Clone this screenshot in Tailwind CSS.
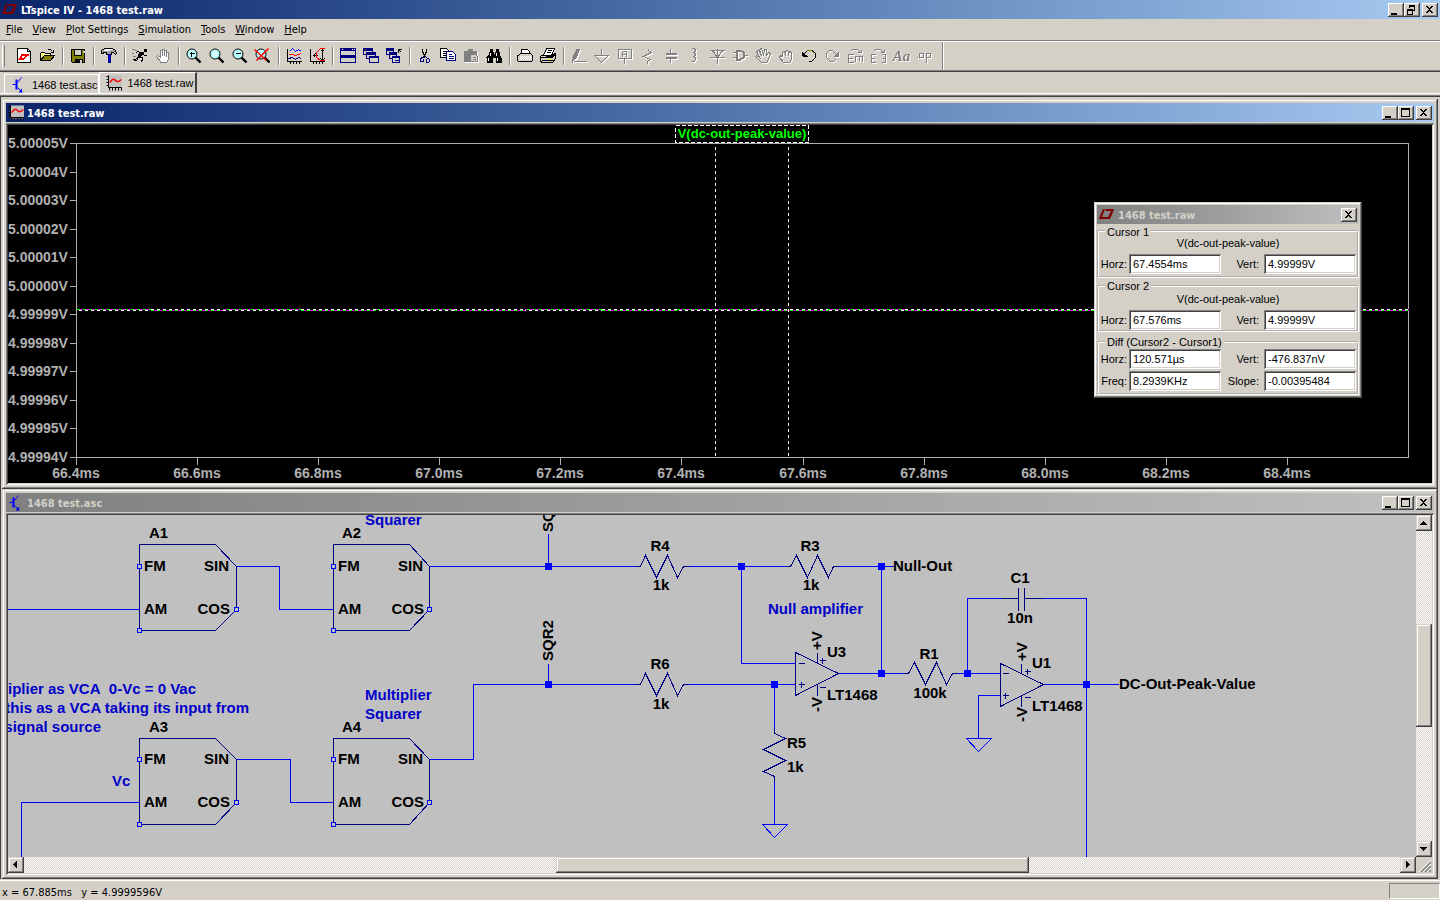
<!DOCTYPE html>
<html lang="en">
<head>
    <meta charset="UTF-8">
    <meta name="viewport" content="width=device-width, initial-scale=1.0">
    <title>LTspice IV - 1468 test.raw</title>
    <script src="https://cdn.jsdelivr.net/npm/@tailwindcss/browser@4"></script>
</head>
<body class="h-screen flex flex-col overflow-hidden bg-[#d4d0c8] text-black text-[11px] leading-4 font-['DejaVu_Sans_Condensed','DejaVu_Sans',sans-serif]">

    <!-- shared symbols -->
    <svg class="hidden">
        <symbol id="lt" viewBox="0 0 16 12"><path fill="currentColor" d="M4 0H6L3 8H7L6 10H0L1 7ZM7 0H15L14 3L11 10H6L7 8H9L12 2H6Z"/></symbol>
        <symbol id="wave" viewBox="-.5 -.5 16 16"><path fill="#c0c0c0" d="M2 0H16V13H2Z"/><path fill="none" stroke="#000" d="M2 0V12H15M0 1H2M0 4H2M0 7H2M0 10H2M3 12V15M6 12V15M9 12V15M12 12V15M15 12V15"/><path fill="none" stroke="red" stroke-width="1.5" d="M3 7L6 4H8L10 6H12L15 4"/></symbol>
        <symbol id="npn" viewBox="-.5 -.5 16 16"><path fill="none" stroke="#00f" d="M1 7H5M6 5L10 0M6 10L10 14"/><path fill="#00f" d="M4 2H6V12H4ZM11 15H7L10 11Z"/></symbol>
        <symbol id="min" viewBox="0 0 16 14"><path d="M3 10H9V12H3Z"/></symbol>
        <symbol id="max" viewBox="0 0 16 14"><path d="M3 2H12V11H3ZM4 4V10H11V4Z" fill-rule="evenodd"/></symbol>
        <symbol id="restore" viewBox="0 0 16 14"><path fill-rule="evenodd" d="M5 2H11V8H9V7H10V4H6V5H5ZM3 6H9V12H3ZM4 8V11H8V8Z"/></symbol>
        <symbol id="close" viewBox="0 0 16 14"><path d="M4 3H6V4H7V5H8V4H9V3H11V4H10V5H9V6H8V7H9V8H10V9H11V10H9V9H8V8H7V9H6V10H4V9H5V8H6V7H7V6H6V5H5V4H4Z"/></symbol>
    </svg>

    <!-- title bar -->
    <header class="h-[19px] shrink-0 flex items-center px-0.5 bg-linear-to-r from-[#0a246a] to-[#a6caf0]">
        <svg class="w-4 h-3 mr-[3px] text-[#800000]"><use href="#lt"/></svg>
        <h1 class="flex-1 pt-0.5 font-bold text-white">LTspice IV - 1468 test.raw</h1>
        <button aria-label="Minimize" class="w-4 h-3.5 bg-[#d4d0c8] shadow-[inset_-1px_-1px_#404040,inset_1px_1px_#fff,inset_-2px_-2px_#808080]"><svg class="w-4 h-3.5"><use href="#min"/></svg></button>
        <button aria-label="Restore" class="w-4 h-3.5 bg-[#d4d0c8] shadow-[inset_-1px_-1px_#404040,inset_1px_1px_#fff,inset_-2px_-2px_#808080]"><svg class="w-4 h-3.5"><use href="#restore"/></svg></button>
        <button aria-label="Close" class="ml-0.5 w-4 h-3.5 bg-[#d4d0c8] shadow-[inset_-1px_-1px_#404040,inset_1px_1px_#fff,inset_-2px_-2px_#808080]"><svg class="w-4 h-3.5"><use href="#close"/></svg></button>
    </header>

    <!-- menu -->
    <nav class="h-[22px] shrink-0 flex items-center gap-2.5 pl-1.5 pt-px border-b border-[#808080]">
        <button><u>F</u>ile</button>
        <button><u>V</u>iew</button>
        <button><u>P</u>lot Settings</button>
        <button><u>S</u>imulation</button>
        <button><u>T</u>ools</button>
        <button><u>W</u>indow</button>
        <button><u>H</u>elp</button>
    </nav>

    <!-- toolbar -->
    <div class="h-[31px] shrink-0 flex items-center pb-px border-t border-t-white border-b border-b-[#404040] shadow-[inset_0_-1px_#808080]">
        <div class="w-[3px] h-[22px] ml-0.5 mr-2 border-l border-l-white border-r border-r-[#808080]"></div>
        <div class="flex">
            <button aria-label="New schematic" class="w-[23px] pl-[3px]"><svg class="size-4" viewBox="-.5 -.5 16 16" shape-rendering="crispEdges"><path fill="#fff" stroke="#000" d="M1 0H11L14 3V14H1Z"/><path fill="none" stroke="#000" d="M11 0V3H14"/><path fill="red" d="M5 5H7L5 9H8L7 11H2L4 8ZM7 5H13L12 7H11L9 10H7L9 7H6Z"/></svg></button>
            <button aria-label="Open" class="w-[23px] pl-[3px]"><svg class="size-4" viewBox="-.5 -.5 16 16" shape-rendering="crispEdges"><path fill="#ff8" stroke="#000" d="M1 12V5L2 4H5L6 5H11V7"/><path fill="#808000" stroke="#000" d="M1 12L5 7H15L11 12Z"/><path fill="none" stroke="#000" d="M8 2L9 1H11L13 3M14 1V4H11"/></svg></button>
        </div>
        <div class="w-0.5 h-[18px] mx-[3px] border-l border-l-[#808080] border-r border-r-white"></div>
        <div class="flex">
            <button aria-label="Save" class="w-[23px] pl-[3px]"><svg class="size-4" viewBox="-.5 -.5 16 16" shape-rendering="crispEdges"><path fill="#808000" stroke="#000" d="M1 1H14V14H2L1 13Z"/><path fill="#d4d0c8" stroke="#000" d="M4 1H11V7H4Z"/><path d="M4 10H12V14H4Z"/><path fill="#d4d0c8" d="M9 11H11V14H9ZM12 2H14V4H12Z"/></svg></button>
        </div>
        <div class="w-0.5 h-[18px] mx-[3px] border-l border-l-[#808080] border-r border-r-white"></div>
        <div class="flex">
            <button aria-label="Control panel" class="w-[23px] pl-[3px]"><svg class="size-4" viewBox="-.5 -.5 16 16" shape-rendering="crispEdges"><path fill="#a0a0a0" stroke="#000" d="M0 2L3 0H11L14 2L15 5L14 6L12 4H10V6H5V4H3L1 5H0Z"/><path stroke="#fff" d="M3 1H11M2 2H8"/><path fill="#00f" stroke="#000080" d="M7 6H9V14H7Z"/></svg></button>
        </div>
        <div class="w-0.5 h-[18px] mx-[3px] border-l border-l-[#808080] border-r border-r-white"></div>
        <div class="flex">
            <button aria-label="Run" class="w-[23px] pl-0.5"><svg class="size-4" viewBox="-.5 -.5 16 16" shape-rendering="crispEdges"><path d="M12 0H15V3H12ZM8 3H12V5L9 9H6V7Z"/><path fill="none" stroke="#000" d="M9 4L6 3L4 5M11 5L13 7H15M8 8L11 10L10 14M9 8L12 10M7 8L4 11H1M7 9L5 12H2"/><path stroke="#808080" d="M0 1H3M3 2H5M0 5H2M1 8H4"/></svg></button>
            <button disabled aria-label="Halt" class="w-[23px] pl-[3px]"><svg class="size-4" viewBox="-.5 -.5 16 16" shape-rendering="crispEdges"><path fill="#fff" stroke="#808080" d="M5 13L1 8L2 7L5 9V2H7V7V1H9V7V2H11V8V4H13V11L11 14H5Z"/></svg></button>
        </div>
        <div class="w-0.5 h-[18px] mx-[3px] border-l border-l-[#808080] border-r border-r-white"></div>
        <div class="flex">
            <button aria-label="Zoom in" class="w-[23px] pl-[3px]"><svg class="size-4" viewBox="-.5 -.5 16 16"><circle cx="5.5" cy="5.5" r="5" fill="#bff" stroke="#000"/><path stroke="#000" shape-rendering="crispEdges" d="M3 5H8M5 3V8"/><path stroke="#000" stroke-width="2.4" d="M9 9L14 14"/></svg></button>
            <button aria-label="Pan" class="w-[23px] pl-[3px]"><svg class="size-4" viewBox="-.5 -.5 16 16"><circle cx="5.5" cy="5.5" r="5" fill="#dff" stroke="#000"/><circle cx="5.5" cy="5.5" r="3.8" fill="none" stroke="#8ff"/><path stroke="#000" stroke-width="2.4" d="M9 9L14 14"/></svg></button>
            <button aria-label="Zoom out" class="w-[23px] pl-[3px]"><svg class="size-4" viewBox="-.5 -.5 16 16"><circle cx="5.5" cy="5.5" r="5" fill="#bff" stroke="#000"/><path stroke="#000" shape-rendering="crispEdges" d="M3 5H8"/><path stroke="#000" stroke-width="2.4" d="M9 9L14 14"/></svg></button>
            <button aria-label="Zoom full extents" class="w-[23px] pl-0.5"><svg class="size-4" viewBox="-.5 -.5 16 16"><circle cx="6.5" cy="5.5" r="5" fill="#bff" stroke="#000"/><path stroke="#000" stroke-width="2.4" d="M10 9L15 14"/><path stroke="red" stroke-width="1.5" d="M0 1L12 12M14 0L2 12"/></svg></button>
        </div>
        <div class="w-0.5 h-[18px] mx-[3px] border-l border-l-[#808080] border-r border-r-white"></div>
        <div class="flex">
            <button aria-label="Pick visible traces" class="w-[23px] pl-[3px]"><svg class="size-4" viewBox="-.5 -.5 16 16" shape-rendering="crispEdges"><path fill="none" stroke="#000" d="M1 0V13H16M0 2H1M0 5H1M0 8H1M0 11H1M4 13V15M7 13V15M10 13V15M13 13V15"/><path fill="none" stroke="#00f" d="M3 3L6 0L9 3L12 1L15 3"/><path fill="none" stroke="red" d="M2 6H6L9 7L15 5"/><path fill="none" stroke="#000080" d="M2 10L6 9L9 11L12 9L15 10"/></svg></button>
            <button aria-label="Autorange" class="w-[23px] pl-[3px]"><svg class="size-4" viewBox="-.5 -.5 16 16" shape-rendering="crispEdges"><path fill="none" stroke="#000" d="M1 0V13H16M0 2H1M0 5H1M0 8H1M0 11H1M4 13V15M7 13V15M10 13V15M13 13V15M13 1V12M11 3L13 1L15 3M11 10L13 12L15 10M4 7H8M4 7L6 5M4 7L6 9"/><path fill="none" stroke="red" d="M15 0H11L7 4V9L11 12H15"/></svg></button>
        </div>
        <div class="w-0.5 h-[18px] mx-[3px] border-l border-l-[#808080] border-r border-r-white"></div>
        <div class="flex">
            <button aria-label="Tile windows" class="w-[23px] pl-[3px]"><svg class="size-4" viewBox="-.5 -.5 16 16" shape-rendering="crispEdges"><path fill="#d4d0c8" stroke="#000080" d="M0 0H15V14H0ZM0 7H15"/><path stroke="#000080" stroke-width="2" d="M0 1H15M0 8H15"/><path stroke="#fff" d="M11 1H12M13 1H14M1 1H2"/></svg></button>
            <button aria-label="Cascade windows" class="w-[23px] pl-[3px]"><svg class="size-4" viewBox="-.5 -.5 16 16" shape-rendering="crispEdges"><g fill="#d4d0c8" stroke="#000080"><path d="M0 0H9V6H0ZM0 1H9M0 2H9"/><path d="M3 4H12V10H3ZM3 5H12M3 6H12"/><path d="M6 8H15V14H6ZM6 9H15"/></g><path stroke="red" d="M1 1H2"/></svg></button>
            <button aria-label="Close all windows" class="w-[23px] pl-[3px]"><svg class="size-4" viewBox="-.5 -.5 16 16" shape-rendering="crispEdges"><g fill="#d4d0c8" stroke="#000080"><path d="M0 0H7V6H0ZM0 1H7M0 2H7"/><path d="M3 4H10V10H3ZM3 5H10M3 6H10"/><path d="M6 8H13V14H6ZM6 9H13M8 12H12"/></g><path fill="none" stroke="#000" d="M12 4V1H15M12 1L15 4"/></svg></button>
        </div>
        <div class="w-0.5 h-[18px] mx-[3px] border-l border-l-[#808080] border-r border-r-white"></div>
        <div class="flex">
            <button aria-label="Cut" class="w-[23px] pl-[3px]"><svg class="size-4" viewBox="-.5 -.5 16 16" shape-rendering="crispEdges"><path fill="none" stroke="#000" d="M5 0V3L7 7M9 0V3L7 7V9"/><path fill="none" stroke="#000080" d="M7 8L5 9H4L3 11V13H6V10M8 8L10 10H11L12 11V13L11 14H9V10"/></svg></button>
            <button aria-label="Copy" class="w-[23px] pl-[3px]"><svg class="size-4" viewBox="-.5 -.5 16 16" shape-rendering="crispEdges"><path fill="#fff" stroke="#000" d="M0 0H6L8 2V9H0ZM2 3H5M2 5H6M2 7H6"/><path fill="#fff" stroke="#000080" d="M6 3H12L15 6V12H6ZM8 6H11M8 8H13M8 10H13"/></svg></button>
            <button disabled aria-label="Paste" class="w-[23px] pl-[3px]"><svg class="size-4 drop-shadow-[1px_1px_0_#fff]" viewBox="-.5 -.5 16 16" shape-rendering="crispEdges"><path fill="#808080" d="M0 2H4V0H9V2H13V6H8V13H0Z"/><path fill="#d4d0c8" stroke="#808080" d="M7 6H12L14 8V13H7ZM9 9H12M9 11H12"/></svg></button>
            <button aria-label="Find" class="w-[23px] pl-[3px]"><svg class="size-4" viewBox="-.5 -.5 16 16" shape-rendering="crispEdges"><path d="M3 0H6V3H7V5H8V3H9V0H12V3H13V6L15 9V14H9V9H6V14H0V9L2 6V3H3Z"/><path stroke="#fff" d="M4 4V7M2 9V12M10 4V7M11 9V12"/></svg></button>
        </div>
        <div class="w-0.5 h-[18px] mx-[3px] border-l border-l-[#808080] border-r border-r-white"></div>
        <div class="flex">
            <button aria-label="Print preview" class="w-[23px] pl-[3px]"><svg class="size-4" viewBox="-.5 -.5 16 16" shape-rendering="crispEdges"><path fill="#d4d0c8" stroke="#000" d="M1 7L3 5H13L15 7V12L14 13H1L0 12V7Z"/><path fill="#fff" stroke="#000" d="M4 5V1H10L12 3V5Z"/><path stroke="#fff" stroke-dasharray="1 1" d="M2 8H14M3 9H14M2 10H14M3 11H14"/></svg></button>
            <button aria-label="Print" class="w-[23px] pl-[3px]"><svg class="size-4" viewBox="-.5 -.5 16 16" shape-rendering="crispEdges"><path fill="#d4d0c8" stroke="#000" d="M0 8L3 6H13L15 5V10L12 14H1L0 12Z"/><path fill="#fff" stroke="#000" d="M3 7L6 0H14L11 7ZM7 2H11M6 4H10"/><path stroke="#000" d="M0 9H12L15 6M1 12H12"/><path stroke="#ff0" d="M7 11H10"/></svg></button>
        </div>
        <div class="w-0.5 h-[18px] mx-[3px] border-l border-l-[#808080] border-r border-r-white"></div>
        <div class="flex">
            <button disabled aria-label="Wire" class="w-[23px] pl-[3px]"><svg class="size-4 drop-shadow-[1px_1px_0_#fff]" viewBox="-.5 -.5 16 16" shape-rendering="crispEdges"><path fill="#808080" d="M5 0H9L5 10L2 12L1 9Z"/><path stroke="#808080" d="M2 13H15M1 10V14"/></svg></button>
            <button disabled aria-label="Ground" class="w-[23px] pl-[3px]"><svg class="size-4 drop-shadow-[1px_1px_0_#fff]" viewBox="-.5 -.5 16 16" shape-rendering="crispEdges"><path fill="none" stroke="#808080" d="M7 0V7M0 7H14L7 14Z"/></svg></button>
            <button disabled aria-label="Label net" class="w-[23px] pl-[3px]"><svg class="size-4 drop-shadow-[1px_1px_0_#fff]" viewBox="-.5 -.5 16 16" shape-rendering="crispEdges"><path fill="none" stroke="#808080" d="M1 1H14V10H1ZM7 10V15M5 8V4L6 3H9V8M5 6H9"/></svg></button>
            <button disabled aria-label="Resistor" class="w-[23px] pl-[3px]"><svg class="size-4 drop-shadow-[1px_1px_0_#fff]" viewBox="-.5 -.5 16 16" shape-rendering="crispEdges"><path fill="none" stroke="#808080" d="M8 0V2L11 4L3 8L10 11L7 13V15"/></svg></button>
            <button disabled aria-label="Capacitor" class="w-[23px] pl-[3px]"><svg class="size-4 drop-shadow-[1px_1px_0_#fff]" viewBox="-.5 -.5 16 16" shape-rendering="crispEdges"><path stroke="#808080" d="M7 0V5M7 9V14"/><path stroke="#808080" stroke-width="2" d="M2 5.5H13M2 9.5H13"/></svg></button>
            <button disabled aria-label="Inductor" class="w-[23px] pl-[3px]"><svg class="size-4 drop-shadow-[1px_1px_0_#fff]" viewBox="-.5 -.5 16 16" shape-rendering="crispEdges"><path fill="none" stroke="#808080" d="M5 0H8L9 2L8 4H6H8L9 6L8 8H6H8L9 10L8 13H5"/></svg></button>
            <button disabled aria-label="Diode" class="w-[23px] pl-[3px]"><svg class="size-4 drop-shadow-[1px_1px_0_#fff]" viewBox="-.5 -.5 16 16" shape-rendering="crispEdges"><path fill="none" stroke="#808080" d="M8 0V15M0 2H15M3 3L8 8L13 3M0 9H15"/><path fill="none" stroke="#808080" d="M3 2L8 9L13 2"/></svg></button>
            <button disabled aria-label="Component" class="w-[23px] pl-[3px]"><svg class="size-4 drop-shadow-[1px_1px_0_#fff]" viewBox="-.5 -.5 16 16" shape-rendering="crispEdges"><path fill="none" stroke="#808080" stroke-width="2" d="M4 2H8L11 4V9L8 11H4Z"/><path stroke="#808080" d="M0 4H4M0 9H4M11 7H15"/></svg></button>
            <button disabled aria-label="Move" class="w-[23px] pl-[3px]"><svg class="size-4 drop-shadow-[1px_1px_0_#fff]" viewBox="-.5 -.5 16 16" shape-rendering="crispEdges"><path fill="none" stroke="#808080" d="M6 14L0 8L1 7L4 9L1 3L3 2L6 7L4 1L6 0L8 6L9 1H11V7L13 4L15 5L13 11L11 14Z"/></svg></button>
            <button disabled aria-label="Drag" class="w-[23px] pl-[3px]"><svg class="size-4 drop-shadow-[1px_1px_0_#fff]" viewBox="-.5 -.5 16 16" shape-rendering="crispEdges"><path fill="none" stroke="#808080" d="M5 14L1 9L2 7L4 8V4L5 3L7 4V7V3L9 2L10 3V7V4L12 3L13 5V11L11 14Z"/></svg></button>
            <button aria-label="Undo" class="w-[23px] pl-[3px]"><svg class="size-4" viewBox="-.5 -.5 16 16" shape-rendering="crispEdges"><path fill="none" stroke="#808000" d="M3 5L6 2H10L13 5"/><path fill="none" stroke="#000" d="M2 6L5 3M10 2H11L14 5V9L11 12L10 13H7M1 3V7H5"/><path d="M1 4L6 8H1Z"/></svg></button>
            <button disabled aria-label="Redo" class="w-[23px] pl-[3px]"><svg class="size-4 drop-shadow-[1px_1px_0_#fff]" viewBox="-.5 -.5 16 16" shape-rendering="crispEdges"><path fill="none" stroke="#808080" d="M12 6L9 3L8 2H5L2 5V9L5 12L6 13H9L11 11"/><path fill="#808080" d="M14 3V8H9Z"/></svg></button>
            <button disabled aria-label="Rotate" class="w-[23px] pl-[3px]"><svg class="size-4 drop-shadow-[1px_1px_0_#fff]" viewBox="-.5 -.5 16 16" shape-rendering="crispEdges"><path fill="none" stroke="#808080" d="M3 3L5 1H10L13 4M14 1V4H10M6 6H1V14H6M1 10H5M8 13V8H15V13M12 8V12"/></svg></button>
            <button disabled aria-label="Mirror" class="w-[23px] pl-[3px]"><svg class="size-4 drop-shadow-[1px_1px_0_#fff]" viewBox="-.5 -.5 16 16" shape-rendering="crispEdges"><path fill="none" stroke="#808080" d="M3 3L5 1H10L13 4M14 1V4H10M5 6H1V14H5M1 10H4M11 6H15V14H11M12 10H15"/></svg></button>
            <button disabled aria-label="Text" class="w-[23px] h-4 text-[15px] leading-4 font-bold italic font-['Liberation_Serif',serif] text-[#808080] drop-shadow-[1px_1px_0_#fff]">Aa</button>
            <button disabled aria-label="SPICE directive" class="w-[23px] pl-[3px]"><svg class="size-4 drop-shadow-[1px_1px_0_#fff]" viewBox="-.5 -.5 16 16" shape-rendering="crispEdges"><path fill="none" stroke="#808080" d="M0 9H1M3 5H7V9H3ZM10 14V5H14V9H10"/></svg></button>
        </div>
        <div class="w-0.5 h-full ml-1.5 border-l border-l-[#808080] border-r border-r-white"></div>
    </div>

    <!-- window tabs -->
    <div class="h-[22px] shrink-0 flex items-end pl-1 border-b border-white font-['Liberation_Sans',sans-serif]">
        <button class="h-[19px] flex items-center pt-px pl-1.5 pr-px border-t border-l border-r border-white"><svg class="size-4 mr-[5px]"><use href="#npn"/></svg>1468 test.asc</button>
        <button class="h-[21px] flex items-center pl-1.5 pr-0.5 border-t border-l border-t-white border-l-white border-r-2 border-r-[#404040]"><svg class="size-4 mr-[5px]"><use href="#wave"/></svg>1468 test.raw</button>
    </div>

    <!-- child windows -->
    <main class="flex-1 min-h-0 mt-px pt-1 px-0.5 flex flex-col shadow-[inset_0_1px_#808080,inset_1px_2px_#404040]">

        <section class="flex-1 min-h-0 p-1 flex flex-col bg-[#d4d0c8] shadow-[inset_-1px_-1px_#404040,inset_1px_1px_#d4d0c8,inset_-2px_-2px_#808080,inset_2px_2px_#fff]">
            <div class="h-[19px] shrink-0 flex items-center px-0.5 bg-linear-to-r from-[#0a246a] to-[#a6caf0]">
                <svg class="size-4 mr-[3px]"><use href="#wave"/></svg>
                <h2 class="flex-1 pt-0.5 font-bold text-white">1468 test.raw</h2>
                <button aria-label="Minimize" class="w-4 h-3.5 bg-[#d4d0c8] shadow-[inset_-1px_-1px_#404040,inset_1px_1px_#fff,inset_-2px_-2px_#808080]"><svg class="w-4 h-3.5"><use href="#min"/></svg></button>
                <button aria-label="Maximize" class="w-4 h-3.5 bg-[#d4d0c8] shadow-[inset_-1px_-1px_#404040,inset_1px_1px_#fff,inset_-2px_-2px_#808080]"><svg class="w-4 h-3.5"><use href="#max"/></svg></button>
                <button aria-label="Close" class="ml-0.5 w-4 h-3.5 bg-[#d4d0c8] shadow-[inset_-1px_-1px_#404040,inset_1px_1px_#fff,inset_-2px_-2px_#808080]"><svg class="w-4 h-3.5"><use href="#close"/></svg></button>
            </div>
            <div class="relative flex-1 min-h-0 mt-px p-0.5 shadow-[inset_1px_1px_#808080,inset_-1px_-1px_#fff,inset_2px_2px_#404040,inset_-2px_-2px_#d4d0c8]">
                <svg class="block w-full h-full bg-black font-['Liberation_Sans',sans-serif] font-bold text-[14px]">
                    <g transform="translate(-7.5 -124.5)" fill="none" stroke="#b0b0b0" shape-rendering="crispEdges">
                        <path d="M69 143H1408V457H69M76 143V464"/>
                        <path d="M69 172H76M69 200H76M69 229H76M69 257H76M69 286H76M69 314H76M69 343H76M69 371H76M69 400H76M69 428H76"/>
                        <path d="M197 457V464M318 457V464M439 457V464M560 457V464M681 457V464M803 457V464M924 457V464M1045 457V464M1166 457V464M1287 457V464"/>
                        <!-- trace -->
                        <path stroke="#0f0" d="M76 309H1408"/>
                        <path stroke="#f0f" stroke-dasharray="3 3" d="M79 309H1408"/>
                        <path stroke="#fff" stroke-dasharray="3 3" d="M78 310H1408"/>
                        <path stroke="#000" d="M150 309H222M300 309H375M453 309H524M601 309H676M753 309H827M904 309H978M1054 309H1128M1356 309H1408"/>
                        <path stroke="#fff" stroke-dasharray="3 3" d="M150 309H222M300 309H375M453 309H524M601 309H676M753 309H827M904 309H978M1054 309H1128M1356 309H1408"/>
                        <path stroke="#0f0" d="M150 310H222M300 310H375M453 310H524M601 310H676M753 310H827M904 310H978M1054 310H1128M1356 310H1408"/>
                        <path stroke="#f0f" stroke-dasharray="3 3" d="M153 310H222M303 310H375M456 310H524M604 310H676M756 310H827M907 310H978M1057 310H1128M1359 310H1408"/>
                        <!-- cursors -->
                        <path stroke="#fff" stroke-dasharray="3 3" d="M715 146V457M788 146V457"/>
                        <path stroke="#fff" stroke-dasharray="4 2" d="M675 125H808V142H675Z"/>
                    </g>
                    <g transform="translate(-8 -125)">
                        <text x="742" y="138" text-anchor="middle" fill="#0f0" class="text-[13px]">V(dc-out-peak-value)</text>
                        <g fill="#b0b0b0">
                            <text x="8" y="148">5.00005V</text>
                            <text x="8" y="177">5.00004V</text>
                            <text x="8" y="205">5.00003V</text>
                            <text x="8" y="234">5.00002V</text>
                            <text x="8" y="262">5.00001V</text>
                            <text x="8" y="291">5.00000V</text>
                            <text x="8" y="319">4.99999V</text>
                            <text x="8" y="348">4.99998V</text>
                            <text x="8" y="376">4.99997V</text>
                            <text x="8" y="405">4.99996V</text>
                            <text x="8" y="433">4.99995V</text>
                            <text x="8" y="462">4.99994V</text>
                        </g>
                        <g fill="#b0b0b0" text-anchor="middle">
                            <text x="76" y="478">66.4ms</text>
                            <text x="197" y="478">66.6ms</text>
                            <text x="318" y="478">66.8ms</text>
                            <text x="439" y="478">67.0ms</text>
                            <text x="560" y="478">67.2ms</text>
                            <text x="681" y="478">67.4ms</text>
                            <text x="803" y="478">67.6ms</text>
                            <text x="924" y="478">67.8ms</text>
                            <text x="1045" y="478">68.0ms</text>
                            <text x="1166" y="478">68.2ms</text>
                            <text x="1287" y="478">68.4ms</text>
                        </g>
                    </g>
                </svg>

                <!-- cursor readout -->
                <div class="absolute top-[79px] right-[72px] w-[268px] p-[3px] bg-[#d4d0c8] leading-3 font-['Liberation_Sans',sans-serif] shadow-[inset_-1px_-1px_#404040,inset_1px_1px_#d4d0c8,inset_-2px_-2px_#808080,inset_2px_2px_#fff]">
                    <div class="h-[19px] flex items-center px-0.5 bg-linear-to-r from-[#808080] to-[#c0c0c0] font-['DejaVu_Sans_Condensed','DejaVu_Sans',sans-serif]">
                        <svg class="w-4 h-3 mr-[3px] text-[#800000]"><use href="#lt"/></svg>
                        <h3 class="flex-1 pt-0.5 font-bold text-[#d4d0c8]">1468 test.raw</h3>
                        <button aria-label="Close" class="w-4 h-3.5 bg-[#d4d0c8] shadow-[inset_-1px_-1px_#404040,inset_1px_1px_#fff,inset_-2px_-2px_#808080]"><svg class="w-4 h-3.5"><use href="#close"/></svg></button>
                    </div>
                    <fieldset class="mt-0.5 pb-0.5 border-2 [border-style:groove] border-white">
                        <legend class="h-[10px] overflow-hidden ml-1.5 px-0.5">Cursor 1</legend>
                        <p class="h-[14px] mb-1 leading-[14px] text-center">V(dc-out-peak-value)</p>
                        <div class="flex items-center">
                            <label for="c1-horz" class="w-7 text-right mr-0.5">Horz:</label>
                            <input id="c1-horz" readonly value="67.4554ms" class="w-[92px] h-5 px-1 bg-white shadow-[inset_1px_1px_#808080,inset_-1px_-1px_#fff,inset_2px_2px_#404040,inset_-2px_-2px_#d4d0c8]">
                            <label for="c1-vert" class="w-[38px] text-right mr-[5px]">Vert:</label>
                            <input id="c1-vert" readonly value="4.99999V" class="w-[92px] h-5 px-1 bg-white shadow-[inset_1px_1px_#808080,inset_-1px_-1px_#fff,inset_2px_2px_#404040,inset_-2px_-2px_#d4d0c8]">
                        </div>
                    </fieldset>
                    <fieldset class="mt-0.5 border-2 [border-style:groove] border-white">
                        <legend class="ml-1.5 px-0.5">Cursor 2</legend>
                        <p class="h-[14px] mb-1 leading-[14px] text-center">V(dc-out-peak-value)</p>
                        <div class="flex items-center">
                            <label for="c2-horz" class="w-7 text-right mr-0.5">Horz:</label>
                            <input id="c2-horz" readonly value="67.576ms" class="w-[92px] h-5 px-1 bg-white shadow-[inset_1px_1px_#808080,inset_-1px_-1px_#fff,inset_2px_2px_#404040,inset_-2px_-2px_#d4d0c8]">
                            <label for="c2-vert" class="w-[38px] text-right mr-[5px]">Vert:</label>
                            <input id="c2-vert" readonly value="4.99999V" class="w-[92px] h-5 px-1 bg-white shadow-[inset_1px_1px_#808080,inset_-1px_-1px_#fff,inset_2px_2px_#404040,inset_-2px_-2px_#d4d0c8]">
                        </div>
                    </fieldset>
                    <fieldset class="mt-1 pt-px pb-0.5 border-2 [border-style:groove] border-white">
                        <legend class="ml-1.5 px-0.5">Diff (Cursor2 - Cursor1)</legend>
                        <div class="flex items-center mb-0.5">
                            <label for="d-horz" class="w-7 text-right mr-0.5">Horz:</label>
                            <input id="d-horz" readonly value="120.571µs" class="w-[92px] h-5 px-1 bg-white shadow-[inset_1px_1px_#808080,inset_-1px_-1px_#fff,inset_2px_2px_#404040,inset_-2px_-2px_#d4d0c8]">
                            <label for="d-vert" class="w-[38px] text-right mr-[5px]">Vert:</label>
                            <input id="d-vert" readonly value="-476.837nV" class="w-[92px] h-5 px-1 bg-white shadow-[inset_1px_1px_#808080,inset_-1px_-1px_#fff,inset_2px_2px_#404040,inset_-2px_-2px_#d4d0c8]">
                        </div>
                        <div class="flex items-center">
                            <label for="d-freq" class="w-7 text-right mr-0.5">Freq:</label>
                            <input id="d-freq" readonly value="8.2939KHz" class="w-[92px] h-5 px-1 bg-white shadow-[inset_1px_1px_#808080,inset_-1px_-1px_#fff,inset_2px_2px_#404040,inset_-2px_-2px_#d4d0c8]">
                            <label for="d-slope" class="w-[38px] text-right mr-[5px]">Slope:</label>
                            <input id="d-slope" readonly value="-0.00395484" class="w-[92px] h-5 px-1 bg-white shadow-[inset_1px_1px_#808080,inset_-1px_-1px_#fff,inset_2px_2px_#404040,inset_-2px_-2px_#d4d0c8]">
                        </div>
                    </fieldset>
                </div>
            </div>
        </section>

        <section class="flex-1 min-h-0 p-1 flex flex-col bg-[#d4d0c8] shadow-[inset_-1px_-1px_#404040,inset_1px_1px_#d4d0c8,inset_-2px_-2px_#808080,inset_2px_2px_#fff]">
            <div class="h-[19px] shrink-0 flex items-center px-0.5 bg-linear-to-r from-[#808080] to-[#c0c0c0]">
                <svg class="size-4 mr-[3px]"><use href="#npn"/></svg>
                <h2 class="flex-1 pt-0.5 font-bold text-[#d4d0c8]">1468 test.asc</h2>
                <button aria-label="Minimize" class="w-4 h-3.5 bg-[#d4d0c8] shadow-[inset_-1px_-1px_#404040,inset_1px_1px_#fff,inset_-2px_-2px_#808080]"><svg class="w-4 h-3.5"><use href="#min"/></svg></button>
                <button aria-label="Maximize" class="w-4 h-3.5 bg-[#d4d0c8] shadow-[inset_-1px_-1px_#404040,inset_1px_1px_#fff,inset_-2px_-2px_#808080]"><svg class="w-4 h-3.5"><use href="#max"/></svg></button>
                <button aria-label="Close" class="ml-0.5 w-4 h-3.5 bg-[#d4d0c8] shadow-[inset_-1px_-1px_#404040,inset_1px_1px_#fff,inset_-2px_-2px_#808080]"><svg class="w-4 h-3.5"><use href="#close"/></svg></button>
            </div>
            <div class="flex-1 min-h-0 mt-px p-0.5 grid grid-cols-[1fr_16px] grid-rows-[1fr_16px] shadow-[inset_1px_1px_#808080,inset_-1px_-1px_#fff,inset_2px_2px_#404040,inset_-2px_-2px_#d4d0c8]">
                <svg class="block w-full h-full min-h-0 bg-[#c0c0c0] font-['Liberation_Sans',sans-serif] font-bold text-[15px]">
                    <g transform="translate(-7.5 -514.5)" fill="none" shape-rendering="crispEdges">
                        <!-- wires -->
                        <g stroke="#00f">
                            <path d="M6 609H139M236 566H279V609H333M236 759H290V802H333M139 802H21V860"/>
                            <path d="M429 566H640M548 533V566M429 759H473V684H640M548 663V684"/>
                            <path d="M683 566H790M833 566H893M741 566V663H795M683 684H795M774 684V733M774 776V824M762 824H787L774 837Z"/>
                            <path d="M838 673H908M881 566V673M952 673H1000M967 673V598H1018M1024 598H1086V860M1043 684H1118"/>
                            <path d="M1000 695H978V738M966 738H991L978 751Z"/>
                        </g>
                        <!-- parts -->
                        <g stroke="#000080">
                            <path d="M139 544H215L236 566V609L215 630H139Z"/>
                            <path d="M333 544H409L429 566V609L409 630H333Z"/>
                            <path d="M139 738H215L236 759V802L215 824H139Z"/>
                            <path d="M333 738H409L429 759V802L409 824H333Z"/>
                            <path d="M635 566H640L645 555L656 577L667 555L677 577L683 566H688"/>
                            <path d="M785 566H790L796 555L807 577L817 555L828 577L833 566H838"/>
                            <path d="M635 684H640L645 673L656 695L667 673L677 695L683 684H688"/>
                            <path d="M903 673H908L914 662L925 684L936 662L946 684L952 673H957"/>
                            <path d="M774 728V733L785 738L763 749L785 760L763 771L774 776V781"/>
                            <path d="M795 652L838 673L795 695ZM798 663H804M798 684H804M801 681V687M817 652V663M817 684V695M819 660H825M822 657V663M819 687H825"/>
                            <path d="M1000 663L1043 684L1000 706ZM1002 673H1008M1002 695H1008M1005 692V698M1021 663V673M1021 695V706M1024 671H1030M1027 668V674M1024 697H1030"/>
                            <path d="M1001 598H1018M1018 587V610M1024 587V610M1024 598H1043"/>
                        </g>
                        <!-- open pins -->
                        <g stroke="#00f" fill="#c0c0c0">
                            <path d="M137 564h4v4h-4zM137 628h4v4h-4zM234 607h4v4h-4z"/>
                            <path d="M331 564h4v4h-4zM331 628h4v4h-4zM427 607h4v4h-4z"/>
                            <path d="M137 757h4v4h-4zM137 822h4v4h-4zM234 800h4v4h-4z"/>
                            <path d="M331 757h4v4h-4zM331 822h4v4h-4zM427 800h4v4h-4z"/>
                        </g>
                        <!-- junctions -->
                        <g stroke="#00f" fill="#00f">
                            <path d="M545 563h6v6h-6zM738 563h6v6h-6zM878 563h6v6h-6zM545 681h6v6h-6zM771 681h6v6h-6z"/>
                            <path d="M878 670h6v6h-6zM964 670h6v6h-6zM1083 681h6v6h-6z"/>
                        </g>
                    </g>
                    <g transform="translate(-8 -515)">
                        <g fill="#0000c8">
                            <text x="365" y="525">Squarer</text>
                            <text x="365" y="700">Multiplier</text>
                            <text x="365" y="719">Squarer</text>
                            <text x="768" y="614">Null amplifier</text>
                            <text x="112" y="786">Vc</text>
                            <text x="196" y="694" text-anchor="end">Multiplier as VCA&#160; 0-Vc = 0 Vac</text>
                            <text x="249" y="713" text-anchor="end">this as a VCA taking its input from</text>
                            <text x="101" y="732" text-anchor="end">signal source</text>
                        </g>
                        <text x="149" y="538">A1</text>
                        <text x="144" y="571">FM</text>
                        <text x="229" y="571" text-anchor="end">SIN</text>
                        <text x="144" y="614">AM</text>
                        <text x="230" y="614" text-anchor="end">COS</text>
                        <text x="342" y="538">A2</text>
                        <text x="338" y="571">FM</text>
                        <text x="423" y="571" text-anchor="end">SIN</text>
                        <text x="338" y="614">AM</text>
                        <text x="424" y="614" text-anchor="end">COS</text>
                        <text x="149" y="732">A3</text>
                        <text x="144" y="764">FM</text>
                        <text x="229" y="764" text-anchor="end">SIN</text>
                        <text x="144" y="807">AM</text>
                        <text x="230" y="807" text-anchor="end">COS</text>
                        <text x="342" y="732">A4</text>
                        <text x="338" y="764">FM</text>
                        <text x="423" y="764" text-anchor="end">SIN</text>
                        <text x="338" y="807">AM</text>
                        <text x="424" y="807" text-anchor="end">COS</text>
                        <text transform="translate(553 532) rotate(-90)">SQR1</text>
                        <text transform="translate(553 661) rotate(-90)">SQR2</text>
                        <g text-anchor="middle">
                            <text x="660" y="551">R4</text>
                            <text x="661" y="590">1k</text>
                            <text x="810" y="551">R3</text>
                            <text x="811" y="590">1k</text>
                            <text x="660" y="669">R6</text>
                            <text x="661" y="709">1k</text>
                            <text x="929" y="659">R1</text>
                            <text x="930" y="698">100k</text>
                            <text x="1020" y="583">C1</text>
                            <text x="1020" y="623">10n</text>
                        </g>
                        <text x="787" y="748">R5</text>
                        <text x="787" y="772">1k</text>
                        <text x="893" y="571">Null-Out</text>
                        <text x="827" y="657">U3</text>
                        <text x="827" y="700">LT1468</text>
                        <text x="1032" y="668">U1</text>
                        <text x="1032" y="711">LT1468</text>
                        <text x="1119" y="689">DC-Out-Peak-Value</text>
                        <text transform="translate(822 650) rotate(-90)">+V</text>
                        <text transform="translate(822 712) rotate(-90)">-V</text>
                        <text transform="translate(1027 661) rotate(-90)">+V</text>
                        <text transform="translate(1027 722) rotate(-90)">-V</text>
                    </g>
                </svg>
                <!-- vertical scroll bar -->
                <div class="flex flex-col bg-[repeating-conic-gradient(#fff_0_25%,#d4d0c8_0_50%)] bg-size-[2px_2px]">
                    <button aria-label="Scroll up" class="size-4 bg-[#d4d0c8] shadow-[inset_-1px_-1px_#404040,inset_1px_1px_#d4d0c8,inset_-2px_-2px_#808080,inset_2px_2px_#fff]"><svg class="size-4" viewBox="0 0 16 16" shape-rendering="crispEdges"><path d="M7 6H8V7H9V8H10V9H11V10H4V9H5V8H6V7H7Z"/></svg></button>
                    <div class="grow-[93] basis-0"></div>
                    <div class="grow-[103] basis-0 bg-[#d4d0c8] shadow-[inset_-1px_-1px_#404040,inset_1px_1px_#d4d0c8,inset_-2px_-2px_#808080,inset_2px_2px_#fff]"></div>
                    <div class="grow-[114] basis-0"></div>
                    <button aria-label="Scroll down" class="size-4 bg-[#d4d0c8] shadow-[inset_-1px_-1px_#404040,inset_1px_1px_#d4d0c8,inset_-2px_-2px_#808080,inset_2px_2px_#fff]"><svg class="size-4" viewBox="0 0 16 16" shape-rendering="crispEdges"><path d="M4 6H11V7H10V8H9V9H8V10H7V9H6V8H5V7H4Z"/></svg></button>
                </div>
                <!-- horizontal scroll bar -->
                <div class="flex bg-[repeating-conic-gradient(#fff_0_25%,#d4d0c8_0_50%)] bg-size-[2px_2px]">
                    <button aria-label="Scroll left" class="size-4 bg-[#d4d0c8] shadow-[inset_-1px_-1px_#404040,inset_1px_1px_#d4d0c8,inset_-2px_-2px_#808080,inset_2px_2px_#fff]"><svg class="size-4" viewBox="0 0 16 16" shape-rendering="crispEdges"><path d="M5 7H6V6H7V5H8V4H9V11H8V10H7V9H6V8H5Z"/></svg></button>
                    <div class="grow-[532] basis-0"></div>
                    <div class="grow-[473] basis-0 bg-[#d4d0c8] shadow-[inset_-1px_-1px_#404040,inset_1px_1px_#d4d0c8,inset_-2px_-2px_#808080,inset_2px_2px_#fff]"></div>
                    <div class="grow-[371] basis-0"></div>
                    <button aria-label="Scroll right" class="size-4 bg-[#d4d0c8] shadow-[inset_-1px_-1px_#404040,inset_1px_1px_#d4d0c8,inset_-2px_-2px_#808080,inset_2px_2px_#fff]"><svg class="size-4" viewBox="0 0 16 16" shape-rendering="crispEdges"><path d="M6 4H7V5H8V6H9V7H10V8H9V9H8V10H7V11H6Z"/></svg></button>
                </div>
                <svg class="size-4" viewBox="0 0 16 16"><path stroke="#fff" d="M3 15L15 3M7 15L15 7M11 15L15 11"/><path stroke="#808080" stroke-width="1.5" d="M5 15L15 5M9 15L15 9M13 15L15 13"/></svg>
            </div>
        </section>
    </main>

    <!-- status bar -->
    <footer class="h-5 shrink-0 flex items-center mt-px pl-0.5 border-t border-white">
        <p class="flex-1 pt-1 whitespace-pre">x = 67.885ms   y = 4.9999596V</p>
        <div class="w-[51px] h-4 border border-[#808080] border-r-white border-b-white"></div>
    </footer>
</body>
</html>
